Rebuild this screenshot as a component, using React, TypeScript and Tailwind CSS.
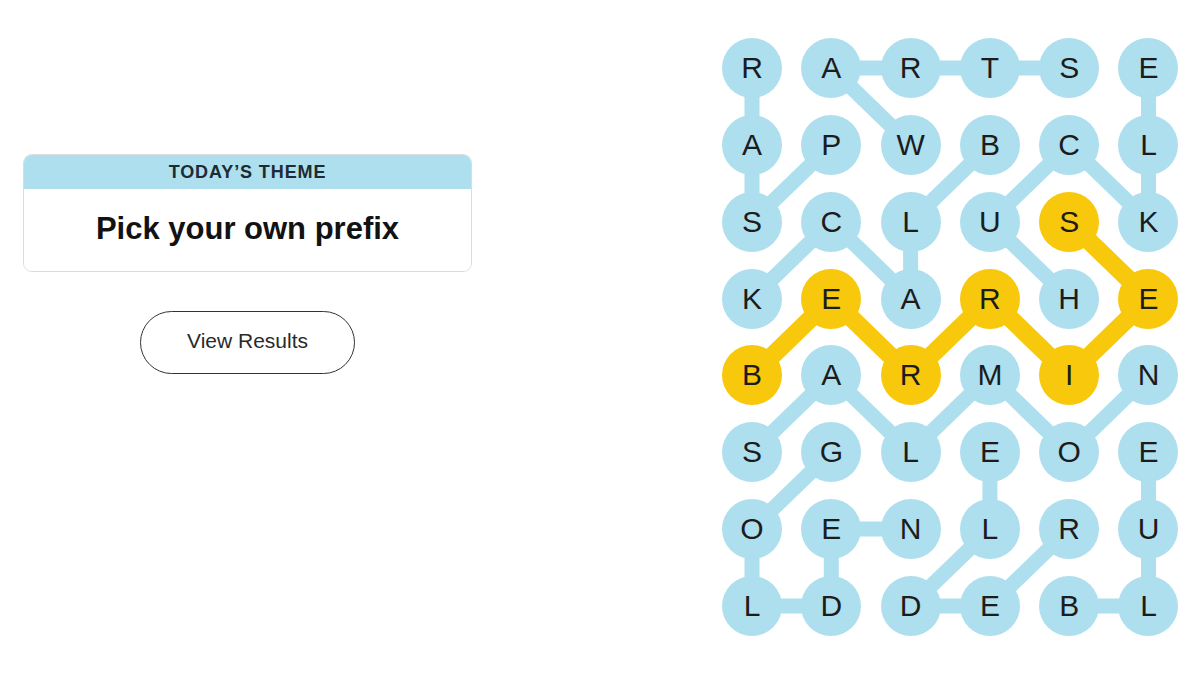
import { type FC } from 'react';

const LETTERS = [
  'RARTSE',
  'APWBCL',
  'SCLUSK',
  'KEARHE',
  'BARMIN',
  'SGLEOE',
  'OENLRU',
  'LDDEBL',
];

// [row, col] pairs, one entry per link
const BLUE_LINKS: [number, number, number, number][] = [
  // RASP
  [0, 0, 1, 0], [1, 0, 2, 0], [2, 0, 1, 1],
  // STRAW
  [0, 4, 0, 3], [0, 3, 0, 2], [0, 2, 0, 1], [0, 1, 1, 2],
  // BLACK
  [1, 3, 2, 2], [2, 2, 3, 2], [3, 2, 2, 1], [2, 1, 3, 0],
  // HUCKLE
  [3, 4, 2, 3], [2, 3, 1, 4], [1, 4, 2, 5], [2, 5, 1, 5], [1, 5, 0, 5],
  // GOLDEN
  [5, 1, 6, 0], [6, 0, 7, 0], [7, 0, 7, 1], [7, 1, 6, 1], [6, 1, 6, 2],
  // SALMON
  [5, 0, 4, 1], [4, 1, 5, 2], [5, 2, 4, 3], [4, 3, 5, 4], [5, 4, 4, 5],
  // ELDER
  [5, 3, 6, 3], [6, 3, 7, 2], [7, 2, 7, 3], [7, 3, 6, 4],
  // BLUE
  [7, 4, 7, 5], [7, 5, 6, 5], [6, 5, 5, 5],
];

// BERRIES
const YELLOW_PATH: [number, number][] = [
  [4, 0], [3, 1], [4, 2], [3, 3], [4, 4], [3, 5], [2, 4],
];

const isYellow = (r: number, c: number) =>
  YELLOW_PATH.some(([yr, yc]) => yr === r && yc === c);

const cx = (c: number) => 30 + c * 79.3;
const cy = (r: number) => 30 + r * 76.85;

const Board: FC = () => (
  <div className="relative w-[457px] h-[598px]">
    <svg className="absolute inset-0" width="457" height="598" viewBox="0 0 457 598">
      {BLUE_LINKS.map(([r1, c1, r2, c2], i) => (
        <line
          key={i}
          x1={cx(c1)}
          y1={cy(r1)}
          x2={cx(c2)}
          y2={cy(r2)}
          stroke="#aedfee"
          strokeWidth={15}
        />
      ))}
      <polyline
        points={YELLOW_PATH.map(([r, c]) => `${cx(c)},${cy(r)}`).join(' ')}
        fill="none"
        stroke="#f8c80c"
        strokeWidth={18}
        strokeLinejoin="round"
      />
    </svg>

    <div className="relative grid grid-cols-[repeat(6,60px)] gap-x-[19.3px] gap-y-[16.85px]">
      {LETTERS.map((row, r) =>
        row.split('').map((ch, c) => (
          <div
            key={`${r}-${c}`}
            className={
              isYellow(r, c)
                ? 'w-[60px] h-[60px] rounded-full bg-[#f8c80c] flex items-center justify-center'
                : 'w-[60px] h-[60px] rounded-full bg-[#aedfee] flex items-center justify-center'
            }
          >
            <span className="text-[30px] leading-none text-[#1c1c1c] font-['Liberation_Sans',Arial,sans-serif]">
              {ch}
            </span>
          </div>
        ))
      )}
    </div>
  </div>
);

export default function App() {
  return (
    <div className="w-[1200px] h-[675px] bg-white flex font-['Liberation_Sans',Arial,sans-serif]">

      {/* Left panel */}
      <div className="w-[449px] ml-[23px] mt-[154px] flex flex-col items-center">
        <div className="w-full rounded-[9px] border border-[#dcdcdc] overflow-hidden">
          <div className="h-[34px] bg-[#aedfee] flex items-center justify-center">
            <span className="text-[18px] font-bold tracking-[0.05em] text-[#1d2b33] uppercase">
              Today’s Theme
            </span>
          </div>
          <div className="h-[82px] bg-white flex items-center justify-center pb-[2px]">
            <h1 className="text-[31px] font-bold text-[#121212]">Pick your own prefix</h1>
          </div>
        </div>

        <button className="mt-[39px] w-[215px] h-[63px] rounded-full border border-[#333] text-[21px] text-[#2a2a2a] bg-white pb-[3px]">
          View Results
        </button>
      </div>

      {/* Board */}
      <div className="ml-[250px] mt-[38px]">
        <Board />
      </div>
    </div>
  );
}
